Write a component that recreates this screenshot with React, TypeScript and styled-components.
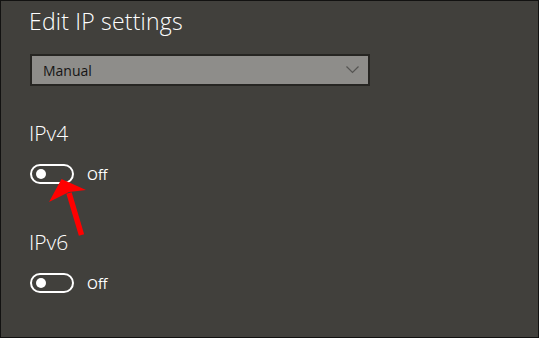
import React from 'react';
import styled, { createGlobalStyle } from 'styled-components';

const GlobalStyle = createGlobalStyle`
  html, body {
    margin: 0;
    padding: 0;
    background: #41403c;
  }
  * {
    box-sizing: border-box;
  }
`;

const Frame = styled.div`
  position: relative;
  width: 539px;
  height: 338px;
  border: 1px solid #121211;
  background: #41403c;
  padding: 5px 0 0 28px;
  display: flex;
  flex-direction: column;
  font-family: 'Open Sans', 'Noto Sans', sans-serif;
  color: #ffffff;
  overflow: hidden;
`;

const Title = styled.h1`
  margin: 0;
  font-size: 23px;
  font-weight: 300;
  line-height: 31px;
  letter-spacing: 0.2px;
`;

const Select = styled.div`
  margin-top: 17px;
  margin-left: 1px;
  width: 340px;
  height: 32px;
  border: 2px solid #262522;
  background: #8e8d8a;
  display: flex;
  align-items: center;
  justify-content: space-between;
  padding: 0 9px 0 11px;
  color: #151515;
  font-size: 14px;
`;

const SectionTitle = styled.h2<{ gap: number }>`
  margin: ${(p) => p.gap}px 0 0 0;
  font-size: 21px;
  font-weight: 300;
  line-height: 28px;
`;

const ToggleRow = styled.div`
  margin-top: 17px;
  margin-left: 1px;
  display: flex;
  align-items: center;
  gap: 13px;
  font-size: 14px;
`;

const Track = styled.div`
  width: 44px;
  height: 20px;
  border: 2px solid #ffffff;
  border-radius: 10px;
  display: flex;
  align-items: center;
  padding-left: 4px;
`;

const Knob = styled.span`
  width: 10px;
  height: 10px;
  border-radius: 50%;
  background: #ffffff;
`;

const Arrow = styled.svg`
  position: absolute;
  left: 0;
  top: 0;
  pointer-events: none;
`;

const Toggle: React.FC<{ label: string }> = ({ label }) => (
  <ToggleRow>
    <Track>
      <Knob />
    </Track>
    <span>{label}</span>
  </ToggleRow>
);

const App: React.FC = () => (
  <>
    <GlobalStyle />
    <Frame>
      <Title>Edit IP settings</Title>
      <Select>
        <span>Manual</span>
        <svg width="13" height="8" viewBox="0 0 13 8">
          <path d="M0.5 0.5 L6.5 6.5 L12.5 0.5" fill="none" stroke="#555452" strokeWidth="1.2" />
        </svg>
      </Select>
      <SectionTitle gap={33}>IPv4</SectionTitle>
      <Toggle label="Off" />
      <SectionTitle gap={44}>IPv6</SectionTitle>
      <Toggle label="Off" />
      <Arrow width="539" height="338" viewBox="0 0 539 338">
        <line x1="80.5" y1="234" x2="68" y2="192" stroke="#ff0000" strokeWidth="5.5" />
        <polygon points="60.5,178 48,201 68,191 85,189" fill="#ff0000" />
      </Arrow>
    </Frame>
  </>
);

export default App;
